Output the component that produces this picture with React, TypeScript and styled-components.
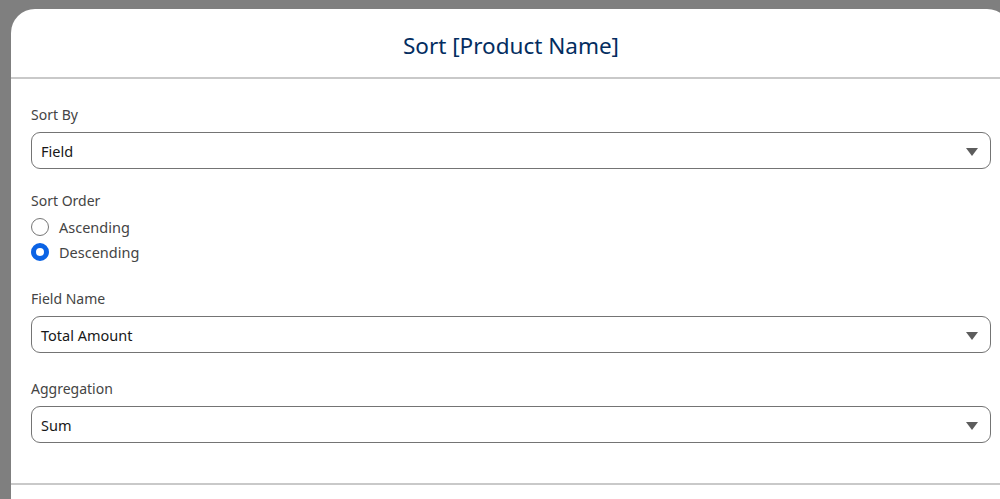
import React from "react";
import styled, { createGlobalStyle } from "styled-components";

const Global = createGlobalStyle`
  html, body {
    margin: 0;
    padding: 0;
    height: 100%;
    overflow: hidden;
    background: #7f7f7f;
    font-family: "Noto Sans", "Open Sans", Arial, sans-serif;
  }
`;

const Backdrop = styled.div`
  padding: 9px 0 0 11px;
  height: 499px;
  box-sizing: border-box;
  overflow: hidden;
`;

const Modal = styled.div`
  width: 1000px;
  height: 490px;
  background: #ffffff;
  border-radius: 24px 24px 0 0;
  display: flex;
  flex-direction: column;
`;

const Header = styled.header`
  height: 68px;
  flex: none;
  border-bottom: 2px solid #c9c9c9;
  display: flex;
  align-items: center;
  justify-content: center;
`;

const Title = styled.h2`
  margin: 0;
  padding-top: 4px;
  font-size: 22.5px;
  font-weight: 400;
  color: #032d60;
`;

const Body = styled.div`
  padding: 26px 20px 40px 20px;
  display: flex;
  flex-direction: column;
  border-bottom: 2px solid #c9c9c9;
`;

const Field = styled.div<{ $top?: number }>`
  display: flex;
  flex-direction: column;
  margin-top: ${(p) => p.$top ?? 0}px;
`;

const Label = styled.label`
  font-size: 14px;
  line-height: 20px;
  color: #444444;
`;

const SelectBox = styled.div`
  margin-top: 7px;
  height: 37px;
  box-sizing: border-box;
  border: 1px solid #747474;
  border-radius: 9px;
  display: flex;
  align-items: center;
  justify-content: space-between;
  padding: 0 12px 0 9px;
  font-size: 14.5px;
  color: #181818;
`;

const Caret = styled.span`
  width: 0;
  height: 0;
  border-left: 6.5px solid transparent;
  border-right: 6.5px solid transparent;
  border-top: 8px solid #5c5c5c;
  margin-top: 2px;
`;

const RadioGroup = styled.div`
  margin-top: 3px;
  display: flex;
  flex-direction: column;
`;

const RadioRow = styled.div`
  height: 25px;
  display: flex;
  align-items: center;
  gap: 10px;
  font-size: 14.5px;
  color: #444444;
`;

const RadioCircle = styled.span<{ $checked?: boolean }>`
  width: 18px;
  height: 18px;
  box-sizing: border-box;
  border-radius: 50%;
  border: ${(p) => (p.$checked ? "5px solid #0b63e5" : "1px solid #767676")};
  background: #ffffff;
`;

function Select({ value }: { value: string }) {
  return (
    <SelectBox>
      <span>{value}</span>
      <Caret />
    </SelectBox>
  );
}

export default function App() {
  return (
    <>
      <Global />
      <Backdrop>
        <Modal>
          <Header>
            <Title>Sort [Product Name]</Title>
          </Header>
          <Body>
            <Field>
              <Label>Sort By</Label>
              <Select value="Field" />
            </Field>
            <Field $top={22}>
              <Label>Sort Order</Label>
              <RadioGroup>
                <RadioRow>
                  <RadioCircle />
                  <span>Ascending</span>
                </RadioRow>
                <RadioRow>
                  <RadioCircle $checked />
                  <span>Descending</span>
                </RadioRow>
              </RadioGroup>
            </Field>
            <Field $top={25}>
              <Label>Field Name</Label>
              <Select value="Total Amount" />
            </Field>
            <Field $top={26}>
              <Label>Aggregation</Label>
              <Select value="Sum" />
            </Field>
          </Body>
        </Modal>
      </Backdrop>
    </>
  );
}
